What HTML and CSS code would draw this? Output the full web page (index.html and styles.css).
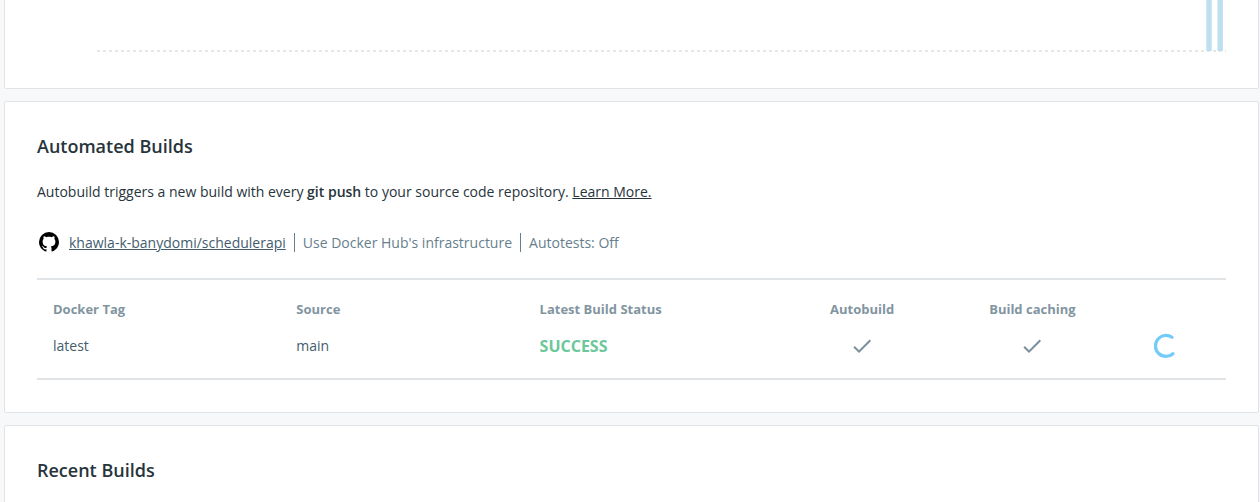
FILE: index.html
```html
<!DOCTYPE html>
<html lang="en">
<head>
<meta charset="utf-8">
<title>Builds</title>
<link rel="stylesheet" href="styles.css">
</head>
<body>
<main class="page">
  <section class="card card-chart">
    <svg class="chart" width="1189" height="56" viewBox="0 0 1189 56" aria-hidden="true">
      <path class="axis" d="M60 51H1189"/>
      <path class="bar" d="M1169.3 0h5.4v51h-5.4zM1180.5 0h5.4v51h-5.4z"/>
    </svg>
  </section>

  <section class="card card-builds">
    <h2 class="title">Automated Builds</h2>
    <p class="intro">Autobuild triggers a new build with every <strong>git push</strong> to your source code repository. <a href="#">Learn More.</a></p>
    <div class="source">
      <svg class="github" width="24" height="24" viewBox="0 0 24 24" aria-hidden="true"><path d="M12 2A10 10 0 0 0 2 12c0 4.42 2.87 8.17 6.84 9.5.5.08.66-.23.66-.5v-1.69c-2.77.6-3.36-1.34-3.36-1.34-.46-1.16-1.11-1.47-1.11-1.47-.91-.62.07-.6.07-.6 1 .07 1.53 1.03 1.53 1.03.87 1.52 2.34 1.07 2.91.83.09-.65.35-1.09.63-1.34-2.22-.25-4.55-1.11-4.55-4.92 0-1.11.38-2 1.03-2.71-.1-.25-.45-1.29.1-2.64 0 0 .84-.27 2.75 1.02.79-.22 1.65-.33 2.5-.33s1.71.11 2.5.33c1.91-1.29 2.75-1.02 2.75-1.02.55 1.35.2 2.39.1 2.64.65.71 1.03 1.6 1.03 2.71 0 3.82-2.34 4.66-4.57 4.91.36.31.69.92.69 1.85V21c0 .27.16.59.67.5C19.14 20.16 22 16.42 22 12A10 10 0 0 0 12 2z"/></svg>
      <a class="repo" href="#">khawla-k-banydomi/schedulerapi</a>
      <span class="meta">Use Docker Hub's infrastructure</span>
      <span class="meta">Autotests: Off</span>
    </div>
    <div class="table">
      <div class="row head">
        <span>Docker Tag</span><span>Source</span><span>Latest Build Status</span>
        <span class="center">Autobuild</span><span class="center">Build caching</span><span></span>
      </div>
      <div class="row">
        <span>latest</span><span>main</span><span class="success">SUCCESS</span>
        <span class="center"><svg class="check" width="24" height="24" viewBox="0 0 24 24"><path d="M9 16.17L4.83 12l-1.42 1.41L9 19 21 7l-1.41-1.41z"/></svg></span>
        <span class="center"><svg class="check" width="24" height="24" viewBox="0 0 24 24"><path d="M9 16.17L4.83 12l-1.42 1.41L9 19 21 7l-1.41-1.41z"/></svg></span>
        <span class="center"><svg class="spinner" width="26" height="26" viewBox="0 0 26 26"><path d="M19 4.3A10.5 10.5 0 1 0 20 20.7"/></svg></span>
      </div>
    </div>
  </section>

  <section class="card card-recent">
    <h2 class="title">Recent Builds</h2>
  </section>
</main>
</body>
</html>
```
FILE: styles.css
```css
* { box-sizing: border-box; }

body {
  margin: 0;
  background: #f7f8fa;
  color: #27343b;
  font: 14px/20px "Open Sans", sans-serif;
}

.page {
  display: flex;
  flex-direction: column;
  gap: 12px;
  width: 1260px;
  height: 502px;
  padding: 0 1px 0 4px;
  overflow: hidden;
}

.card {
  flex: none;
  padding: 0 32px;
  background: #fff;
  border: 1px solid #e0e4e7;
  border-radius: 2px;
}

.card-chart { height: 89px; border-top: 0; border-radius: 0 0 2px 2px; }
.card-builds { height: 312px; padding-top: 32px; }
.card-recent { height: 110px; padding-top: 32px; }

.chart { display: block; }
.axis { fill: none; stroke: #e7e7e7; stroke-width: 2; stroke-dasharray: 3 3; }
.bar { fill: #bddff0; }

.title { margin: 0; font-size: 18px; font-weight: 600; line-height: 25px; }
.intro { margin: 23px 0 0; }
.intro strong { font-weight: 600; }
.intro a { color: inherit; }

.source { display: flex; align-items: center; height: 24px; margin-top: 28px; }
.github { margin-right: 8px; fill: #000; }
.repo { color: #445d6e; line-height: 19px; }
.meta {
  height: 19px;
  margin-left: 8px;
  padding-left: 8px;
  border-left: 1px solid #677f8d;
  color: #677f8d;
  line-height: 19px;
}

.table {
  height: 102px;
  margin-top: 24px;
  padding-top: 15px;
  border-top: 2px solid #e0e4e7;
  border-bottom: 2px solid #e0e4e7;
}
.row {
  display: grid;
  grid-template-columns: 243.3px 243.3px 253.4px 170.4px 170px 97.6px;
  align-items: center;
  height: 48px;
  color: #445d6e;
}
.row > span { padding-left: 16px; }
.row > .center { display: flex; justify-content: center; padding: 0; }
.head { height: 27px; color: #8195a1; font-size: 13px; font-weight: 700; }
.row > .success { color: #6bc89a; font-size: 16px; font-weight: 700; }
.check { fill: #7a8f9b; }
.spinner { fill: none; stroke: #73cbfa; stroke-width: 3.2; stroke-linecap: round; }
```
